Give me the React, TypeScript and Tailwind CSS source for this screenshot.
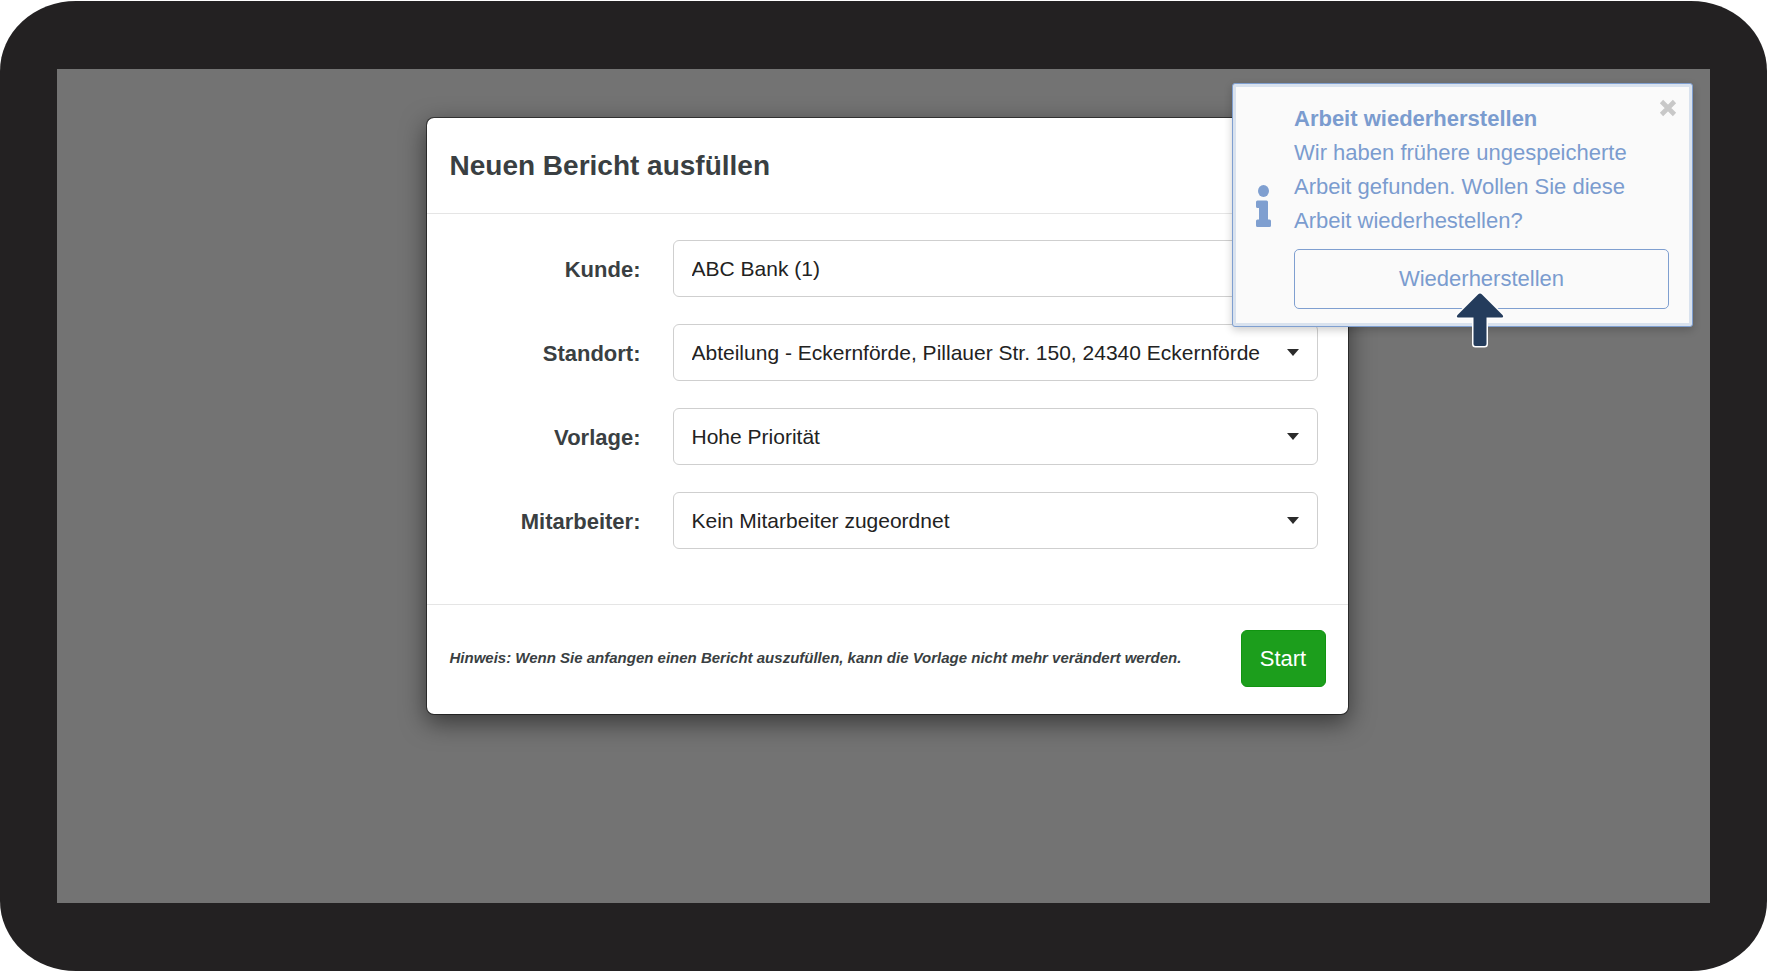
import { useState } from 'react';

interface Field {
  id: string;
  label: string;
  options: string[];
}

const fields: Field[] = [
  { id: 'kunde', label: 'Kunde', options: ['ABC Bank (1)'] },
  { id: 'standort', label: 'Standort', options: ['Abteilung - Eckernförde, Pillauer Str. 150, 24340 Eckernförde'] },
  { id: 'vorlage', label: 'Vorlage', options: ['Hohe Priorität'] },
  { id: 'mitarbeiter', label: 'Mitarbeiter', options: ['Kein Mitarbeiter zugeordnet'] },
];

function SelectField({ field }: { field: Field }) {
  return (
    <div className="flex items-center gap-8">
      <label htmlFor={field.id} className="flex-1 pt-0.5 text-right text-[22px] leading-8 font-bold text-[#3a3f42]">
        {field.label}:
      </label>
      <div className="relative w-[645px]">
        <select
          id={field.id}
          className="block h-[57px] w-full appearance-none rounded-md border border-[#cfcfcf] bg-white pr-10 pl-[18px] text-[21px] text-[#222222]"
        >
          {field.options.map((option) => (
            <option key={option}>{option}</option>
          ))}
        </select>
        <svg className="pointer-events-none absolute top-[25px] right-[19px] h-[7px] w-3" viewBox="0 0 12 7" fill="#2b2b2b">
          <path d="M0 0h12L6 7z" />
        </svg>
      </div>
    </div>
  );
}

function RestoreToast({ onClose }: { onClose: () => void }) {
  return (
    <div
      role="alert"
      className="absolute top-[14px] right-[17px] w-[461px] rounded-[3px] border border-[#7f9fd0] bg-[#d9e2ee] p-[3px] shadow-[0_3px_8px_rgba(0,0,0,0.2)]"
    >
      <div className="flex items-center gap-[23px] bg-[#fafafa] pt-[15px] pr-5 pb-[14px] pl-5 text-[22px] leading-[34px] text-[#7b9ccf]">
        <svg className="h-[42px] w-[15px] shrink-0" viewBox="0 0 15 42" fill="#7f9fd0">
          <ellipse cx="7.5" cy="6" rx="5.5" ry="6" />
          <path d="M1.5 15.500h9q1.500 0 1.500 1.500V34.500h1.500q1.500 0 1.500 1.500v4.500q0 1.500-1.500 1.500h-12q-1.500 0-1.500-1.500v-4.500q0-1.500 1.500-1.500H3V23H1.500Q0 23 0 21.500V17q0-1.500 1.500-1.500z" />
        </svg>
        <div className="flex-1">
          <h2 className="font-bold">Arbeit wiederherstellen</h2>
          <p>Wir haben frühere ungespeicherte Arbeit gefunden. Wollen Sie diese Arbeit wiederhestellen?</p>
          <div className="relative mt-[11px]">
            <button className="block h-[60px] w-full rounded-[5px] border border-[#7f9fd0]">Wiederherstellen</button>
            {/* pointer to the restore button */}
            <svg
              className="pointer-events-none absolute top-[42px] left-[161px] h-[58px] w-[50px]"
              viewBox="0 0 50 58"
              fill="#243c5c"
              stroke="#ffffff"
              strokeWidth="3"
              strokeLinejoin="round"
              paintOrder="stroke"
            >
              <path d="M25 2.500Q26 2.500 27 3.500L47.500 24Q49 26 47 26.500H31.500V53Q31.500 55 29.500 55H20.500Q18.500 55 18.500 53V26.500H3Q1 26 2.500 24L23 3.500Q24 2.500 25 2.500z" />
            </svg>
          </div>
        </div>
      </div>
      <button aria-label="Schließen" onClick={onClose} className="absolute top-[15px] right-[15px] size-[18px]">
        <svg className="size-full" viewBox="0 0 18 18" stroke="#c8c8c8" strokeWidth="4.600">
          <path d="M2.500 2.500l13 13M15.500 2.500l-13 13" />
        </svg>
      </button>
    </div>
  );
}

export default function App() {
  const [showToast, setShowToast] = useState(true);

  return (
    <div className="min-h-screen bg-white pt-px font-['Liberation_Sans',Arial,sans-serif]">
      <div className="flex min-h-[calc(100vh-1px)] rounded-[76px/70px] bg-[#232122] px-[57px] py-[68px]">
        <main className="relative flex-1 bg-[#737373] pt-12 pl-[7px]">
          <form
            onSubmit={(e) => e.preventDefault()}
            className="mx-auto max-w-[923px] rounded-lg border border-black/50 bg-white bg-clip-padding shadow-[0_8px_24px_rgba(0,0,0,0.5)]"
          >
            <header className="border-b border-[#e5e5e5] px-[23px] pt-[26px] pb-[25px]">
              <h1 className="text-[28px] leading-[44px] font-bold text-[#3a3f42]">Neuen Bericht ausfüllen</h1>
            </header>

            <div className="flex flex-col gap-[27px] pt-[26px] pr-[30px] pb-[55px] pl-[23px]">
              {fields.map((field) => (
                <SelectField key={field.id} field={field} />
              ))}
            </div>

            <footer className="flex items-center justify-between border-t border-[#e5e5e5] pt-[25px] pr-[22px] pb-[27px] pl-[23px]">
              <p className="text-[15px] font-bold text-[#3a3f42] italic">
                Hinweis: Wenn Sie anfangen einen Bericht auszufüllen, kann die Vorlage nicht mehr verändert werden.
              </p>
              <button className="h-[57px] w-[85px] shrink-0 rounded-md border border-[#119411] bg-[#1c9e1c] text-[22px] text-white">
                Start
              </button>
            </footer>
          </form>

          {showToast && <RestoreToast onClose={() => setShowToast(false)} />}
        </main>
      </div>
    </div>
  );
}
